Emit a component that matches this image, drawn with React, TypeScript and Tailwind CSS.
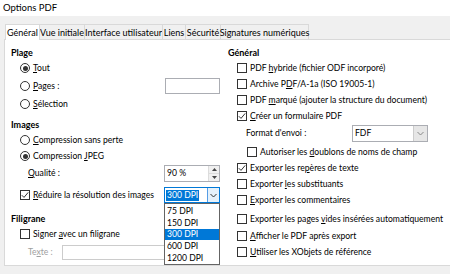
import React from "react";

function U({ children }: { children: React.ReactNode }) {
  return <span className="underline underline-offset-[1px] decoration-[1px]">{children}</span>;
}

function Radio({ checked }: { checked?: boolean }) {
  return (
    <span className="w-[10px] h-[10px] rounded-full border border-[#333333] bg-white flex items-center justify-center shrink-0">
      {checked && <span className="w-[5px] h-[5px] rounded-full bg-[#333333]" />}
    </span>
  );
}

function Check({ checked }: { checked?: boolean }) {
  return (
    <span className="w-[10px] h-[10px] border border-[#333333] bg-white shrink-0 flex items-center justify-center">
      {checked && (
        <svg width="8" height="8" viewBox="0 0 8 8">
          <path d="M0.8 4.2 L3 6.4 L7.2 1.4" fill="none" stroke="#333333" strokeWidth="1" />
        </svg>
      )}
    </span>
  );
}

function Chevron({ color }: { color: string }) {
  return (
    <svg width="7" height="5" viewBox="0 0 7 5">
      <path d="M0.5 1 L3.5 4 L6.5 1" fill="none" stroke={color} strokeWidth="1" />
    </svg>
  );
}

function Tab({ w, active, children }: { w: string; active?: boolean; children: React.ReactNode }) {
  return (
    <div
      className={
        w +
        " h-[15px] flex items-center justify-center whitespace-nowrap border-t border-l border-r border-[#d9d9d9] -mr-[1px] " +
        (active ? "bg-white relative z-10 h-[16px] -mb-[1px]" : "bg-[#f0f0f0]")
      }
    >
      {children}
    </div>
  );
}

export default function App() {
  return (
    <div className="w-[450px] h-[274px] bg-[#f0f0f0] overflow-hidden text-[8.6px] leading-none text-black font-['Lato',sans-serif] whitespace-nowrap flex flex-col">
      <div className="h-[16px] bg-white flex items-center pl-[3px] text-[9.5px]">Options PDF</div>
      <div className="h-[8px]" />
      <div className="flex items-end pl-[5px] h-[15px] text-[9px]">
        <Tab w="w-[35px]" active>Général</Tab>
        <Tab w="w-[46px]">Vue initiale</Tab>
        <Tab w="w-[79px]">Interface utilisateur</Tab>
        <Tab w="w-[24px]">Liens</Tab>
        <Tab w="w-[36px]">Sécurité</Tab>
        <Tab w="w-[89px]">Signatures numériques</Tab>
      </div>
      <div className="ml-[4px] w-[460px] h-[227px] bg-white border border-[#d9d9d9] flex">
        {/* left column */}
        <div className="w-[217px] pl-[6px] pr-[2px] pt-[4px] flex flex-col">
          <div className="h-[16px] flex items-center font-bold text-[9px]">Plage</div>
          <div className="h-[16px] flex items-center ml-[9px] gap-[3px]">
            <Radio checked />
            <span><U>T</U>out</span>
          </div>
          <div className="h-[16px] mt-[2px] flex items-center justify-between">
            <div className="flex items-center ml-[9px] gap-[3px]">
              <Radio />
              <span><U>P</U>ages :</span>
            </div>
            <div className="w-[55px] h-[16px] border border-[#abadb3] bg-white" />
          </div>
          <div className="h-[16px] mt-[2px] flex items-center ml-[9px] gap-[3px]">
            <Radio />
            <span><U>S</U>élection</span>
          </div>
          <div className="h-[16px] mt-[4px] flex items-center font-bold text-[9px]">Images</div>
          <div className="h-[16px] flex items-center ml-[9px] gap-[3px]">
            <Radio />
            <span><U>C</U>ompression sans perte</span>
          </div>
          <div className="h-[16px] flex items-center ml-[9px] gap-[3px]">
            <Radio checked />
            <span>Compression <U>J</U>PEG</span>
          </div>
          <div className="h-[16px] mt-[1px] flex items-center justify-between">
            <span className="ml-[17px]"><U>Q</U>ualité :</span>
            <div className="w-[56px] h-[17px] border border-[#abadb3] bg-white flex items-stretch">
              <span className="flex-1 flex items-center pl-[2px]">90 %</span>
              <span className="w-[11px] flex flex-col bg-[#f0f0f0] border-l border-[#dcdcdc]">
                <span className="flex-1 flex items-center justify-center border-b border-[#dcdcdc]">
                  <svg width="5" height="3" viewBox="0 0 5 3"><path d="M0 3 L2.5 0 L5 3 Z" fill="#444" /></svg>
                </span>
                <span className="flex-1 flex items-center justify-center">
                  <svg width="5" height="3" viewBox="0 0 5 3"><path d="M0 0 L2.5 3 L5 0 Z" fill="#444" /></svg>
                </span>
              </span>
            </div>
          </div>
          <div className="h-[16px] mt-[6px] flex items-center justify-between">
            <div className="flex items-center ml-[9px] gap-[3px]">
              <Check checked />
              <span><U>R</U>éduire la résolution des images</span>
            </div>
            <div className="relative w-[56px] h-[16px] border border-[#0078d7] bg-white flex items-stretch">
              <span className="flex-1 flex items-center pl-[1px]">
                <span className="bg-[#0078d7] text-white px-[1px] h-[11px] flex items-center">300 DPI</span>
              </span>
              <span className="w-[12px] bg-[#e5f1fb] border-l border-[#569de5] flex items-center justify-center">
                <Chevron color="#333" />
              </span>
              <div className="absolute left-[-1px] top-[15px] w-[56px] h-[62px] bg-white border border-[#646464] z-20 flex flex-col pt-[1px]">
                <div className="h-[12px] flex items-center pl-[2px]">75 DPI</div>
                <div className="h-[12px] flex items-center pl-[2px]">150 DPI</div>
                <div className="h-[11px] flex items-center pl-[2px] bg-[#0078d7] text-white">300 DPI</div>
                <div className="h-[12px] flex items-center pl-[2px]">600 DPI</div>
                <div className="h-[12px] flex items-center pl-[2px]">1200 DPI</div>
              </div>
            </div>
          </div>
          <div className="h-[16px] mt-[7px] flex items-center font-bold text-[9px]">Filigrane</div>
          <div className="h-[16px] flex items-center ml-[9px] gap-[3px]">
            <Check />
            <span>Signer <U>a</U>vec un filigrane</span>
          </div>
          <div className="h-[16px] mt-[2px] flex items-center">
            <span className="ml-[17px] w-[34px] text-[#a0a0a0]">Te<U>x</U>te :</span>
            <div className="w-[158px] h-[15px] border border-[#cccccc] bg-white" />
          </div>
        </div>
        {/* right column */}
        <div className="flex-1 pl-[6px] pt-[4px] flex flex-col">
          <div className="h-[16px] flex items-center font-bold text-[9px]">Général</div>
          <div className="h-[16px] flex items-center ml-[9px] gap-[3px]">
            <Check />
            <span>PDF <U>h</U>ybride (fichier ODF incorporé)</span>
          </div>
          <div className="h-[16px] flex items-center ml-[9px] gap-[3px]">
            <Check />
            <span>Archive P<U>D</U>F/A-1a (ISO 19005-1)</span>
          </div>
          <div className="h-[16px] flex items-center ml-[9px] gap-[3px]">
            <Check />
            <span>PDF <U>m</U>arqué (ajouter la structure du document)</span>
          </div>
          <div className="h-[16px] flex items-center ml-[9px] gap-[3px]">
            <Check checked />
            <span><U>C</U>réer un formulaire PDF</span>
          </div>
          <div className="h-[17px] mt-[1px] flex items-center">
            <span className="ml-[18px] w-[106px]">Format d'envoi :</span>
            <div className="w-[76px] h-[17px] border border-[#abadb3] bg-white flex items-stretch">
              <span className="flex-1 flex items-center pl-[2px]">FDF</span>
              <span className="w-[14px] bg-[#e6e6e6] border-l border-[#cccccc] flex items-center justify-center">
                <Chevron color="#888" />
              </span>
            </div>
          </div>
          <div className="h-[16px] mt-[2px] flex items-center ml-[19px] gap-[3px]">
            <Check />
            <span>Autoriser les <U>d</U>oublons de noms de champ</span>
          </div>
          <div className="h-[16px] flex items-center ml-[9px] gap-[3px]">
            <Check checked />
            <span>Exporter les re<U>p</U>ères de texte</span>
          </div>
          <div className="h-[16px] flex items-center ml-[9px] gap-[3px]">
            <Check />
            <span>Exporter <U>l</U>es substituants</span>
          </div>
          <div className="h-[16px] flex items-center ml-[9px] gap-[3px]">
            <Check />
            <span><U>E</U>xporter les commentaires</span>
          </div>
          <div className="h-[16px] mt-[3px] flex items-center ml-[9px] gap-[3px]">
            <Check />
            <span>Exporter les pages <U>v</U>ides insérées automatiquement</span>
          </div>
          <div className="h-[16px] mt-[1px] flex items-center ml-[9px] gap-[3px]">
            <Check />
            <span><U>A</U>fficher le PDF après export</span>
          </div>
          <div className="h-[16px] flex items-center ml-[9px] gap-[3px]">
            <Check />
            <span><U>U</U>tiliser les XObjets de référence</span>
          </div>
        </div>
      </div>
    </div>
  );
}
